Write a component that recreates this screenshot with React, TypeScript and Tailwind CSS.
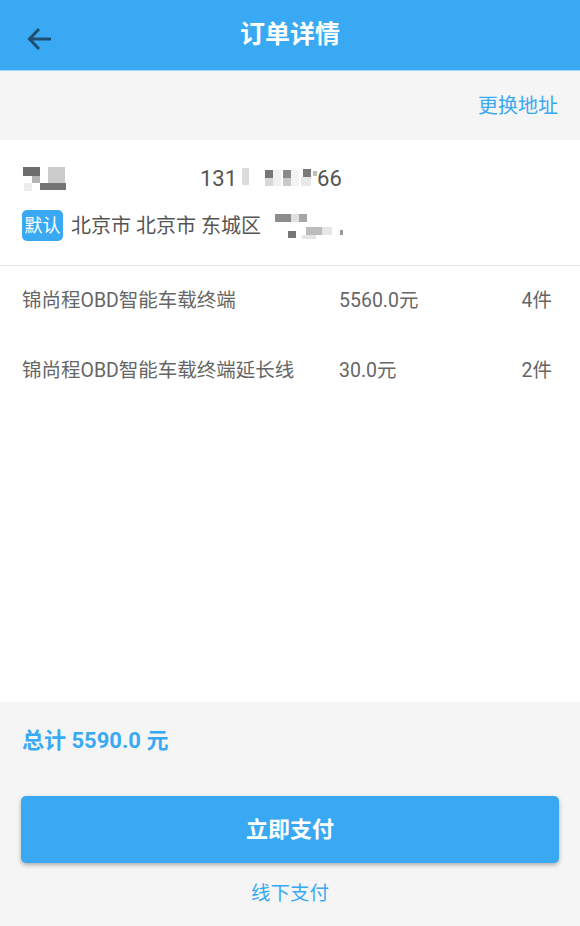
const items = [
  { name: '锦尚程OBD智能车载终端', price: '5560.0元', qty: '4件' },
  { name: '锦尚程OBD智能车载终端延长线', price: '30.0元', qty: '2件' },
];

function Mosaic({ w, h, cells }: { w: number; h: number; cells: [number, number, number, number, string][] }) {
  return (
    <svg width={w} height={h} viewBox={`0 0 ${w} ${h}`} className="block">
      {cells.map(([x, y, cw, ch, c], i) => (
        <rect key={i} x={x} y={y} width={cw} height={ch} fill={c} />
      ))}
    </svg>
  );
}

export default function App() {
  return (
    <div
      className="w-[580px] h-[926px] flex flex-col bg-white overflow-hidden"
      style={{ fontFamily: "Roboto, 'Noto Sans CJK SC', sans-serif" }}
    >
      {/* header */}
      <div className="h-[71px] shrink-0 bg-[#3aa9f3] border-b border-[#9ed4f9] relative flex items-center justify-center">
        <svg width="26" height="24" viewBox="0 0 26 24" className="absolute left-[27px] top-[27px]">
          <path d="M24 12H3M12 2 2.5 12 12 22" fill="none" stroke="#1f4e72" strokeWidth="3" />
        </svg>
        <h1 className="text-white text-[25px] font-bold">订单详情</h1>
      </div>

      {/* change address */}
      <div className="h-[69px] shrink-0 bg-[#f5f5f5] flex items-center justify-end pr-[22px]">
        <span className="text-[#3aa9f3] text-[20px]">更换地址</span>
      </div>

      {/* address */}
      <div className="h-[126px] shrink-0 border-b border-[#e3e3e3] px-[22px] pt-[24px]">
        <div className="flex items-center h-[28px]">
          <div className="w-[178px]">
            <Mosaic
              w={44}
              h={25}
              cells={[
                [1, 1, 17, 9, '#6d6d6d'],
                [26, 1, 17, 16, '#cbcbcb'],
                [10, 10, 8, 7, '#b5b5b5'],
                [2, 17, 8, 8, '#ececec'],
                [18, 17, 26, 7, '#747474'],
              ]}
            />
          </div>
          <span className="text-[#555] text-[22px]">131</span>
          <Mosaic
            w={80}
            h={22}
            cells={[
              [5, 1, 7, 17, '#dcdcdc'],
              [28, 3, 8, 8, '#777'],
              [28, 11, 8, 8, '#d8d8d8'],
              [36, 3, 8, 16, '#f0f0f0'],
              [46, 3, 8, 8, '#8a8a8a'],
              [46, 11, 8, 8, '#c9c9c9'],
              [54, 3, 8, 16, '#f3f3f3'],
              [66, 2, 8, 8, '#7a7a7a'],
              [64, 10, 10, 9, '#e9e9e9'],
              [76, 4, 4, 5, '#bdbdbd'],
            ]}
          />
          <span className="text-[#555] text-[22px]">66</span>
        </div>
        <div className="flex items-center mt-[18px]">
          <span className="w-[41px] h-[31px] rounded-[5px] bg-[#3aa9f3] text-white text-[18px] flex items-center justify-center">
            默认
          </span>
          <span className="ml-[8px] text-[#555] text-[20px]">北京市 北京市 东城区</span>
          <div className="ml-[12px]">
            <Mosaic
              w={74}
              h={26}
              cells={[
                [2, 1, 16, 8, '#8c8c8c'],
                [18, 1, 8, 8, '#e0e0e0'],
                [26, 1, 8, 8, '#a6a6a6'],
                [15, 18, 8, 7, '#777'],
                [33, 14, 16, 8, '#bcbcbc'],
                [29, 22, 14, 4, '#e5e5e5'],
                [49, 14, 10, 8, '#e6e6e6'],
                [67, 17, 3, 5, '#999'],
              ]}
            />
          </div>
        </div>
      </div>

      {/* items */}
      <div className="flex-1">
        {items.map((it, i) => (
          <div key={i} className="h-[70px] flex items-center px-[22px] text-[#666] text-[19.5px]">
            <span className="w-[317px]">{it.name}</span>
            <span className="flex-1">{it.price}</span>
            <span className="pr-[6px]">{it.qty}</span>
          </div>
        ))}
      </div>

      {/* bottom */}
      <div className="h-[224px] shrink-0 bg-[#f5f5f5] px-[21px] flex flex-col">
        <div className="h-[76px] flex items-center pl-[1px] text-[#3aa9f3] text-[22px] font-bold">总计 5590.0 元</div>
        <button className="mt-[18px] h-[67px] w-full rounded-[5px] bg-[#3aa9f3] text-white text-[22px] font-bold shadow-[0_2px_4px_rgba(0,0,0,0.3)]">
          立即支付
        </button>
        <div className="flex-1 flex items-center justify-center pb-[2px] text-[#3aa9f3] text-[19.5px]">线下支付</div>
      </div>
    </div>
  );
}
